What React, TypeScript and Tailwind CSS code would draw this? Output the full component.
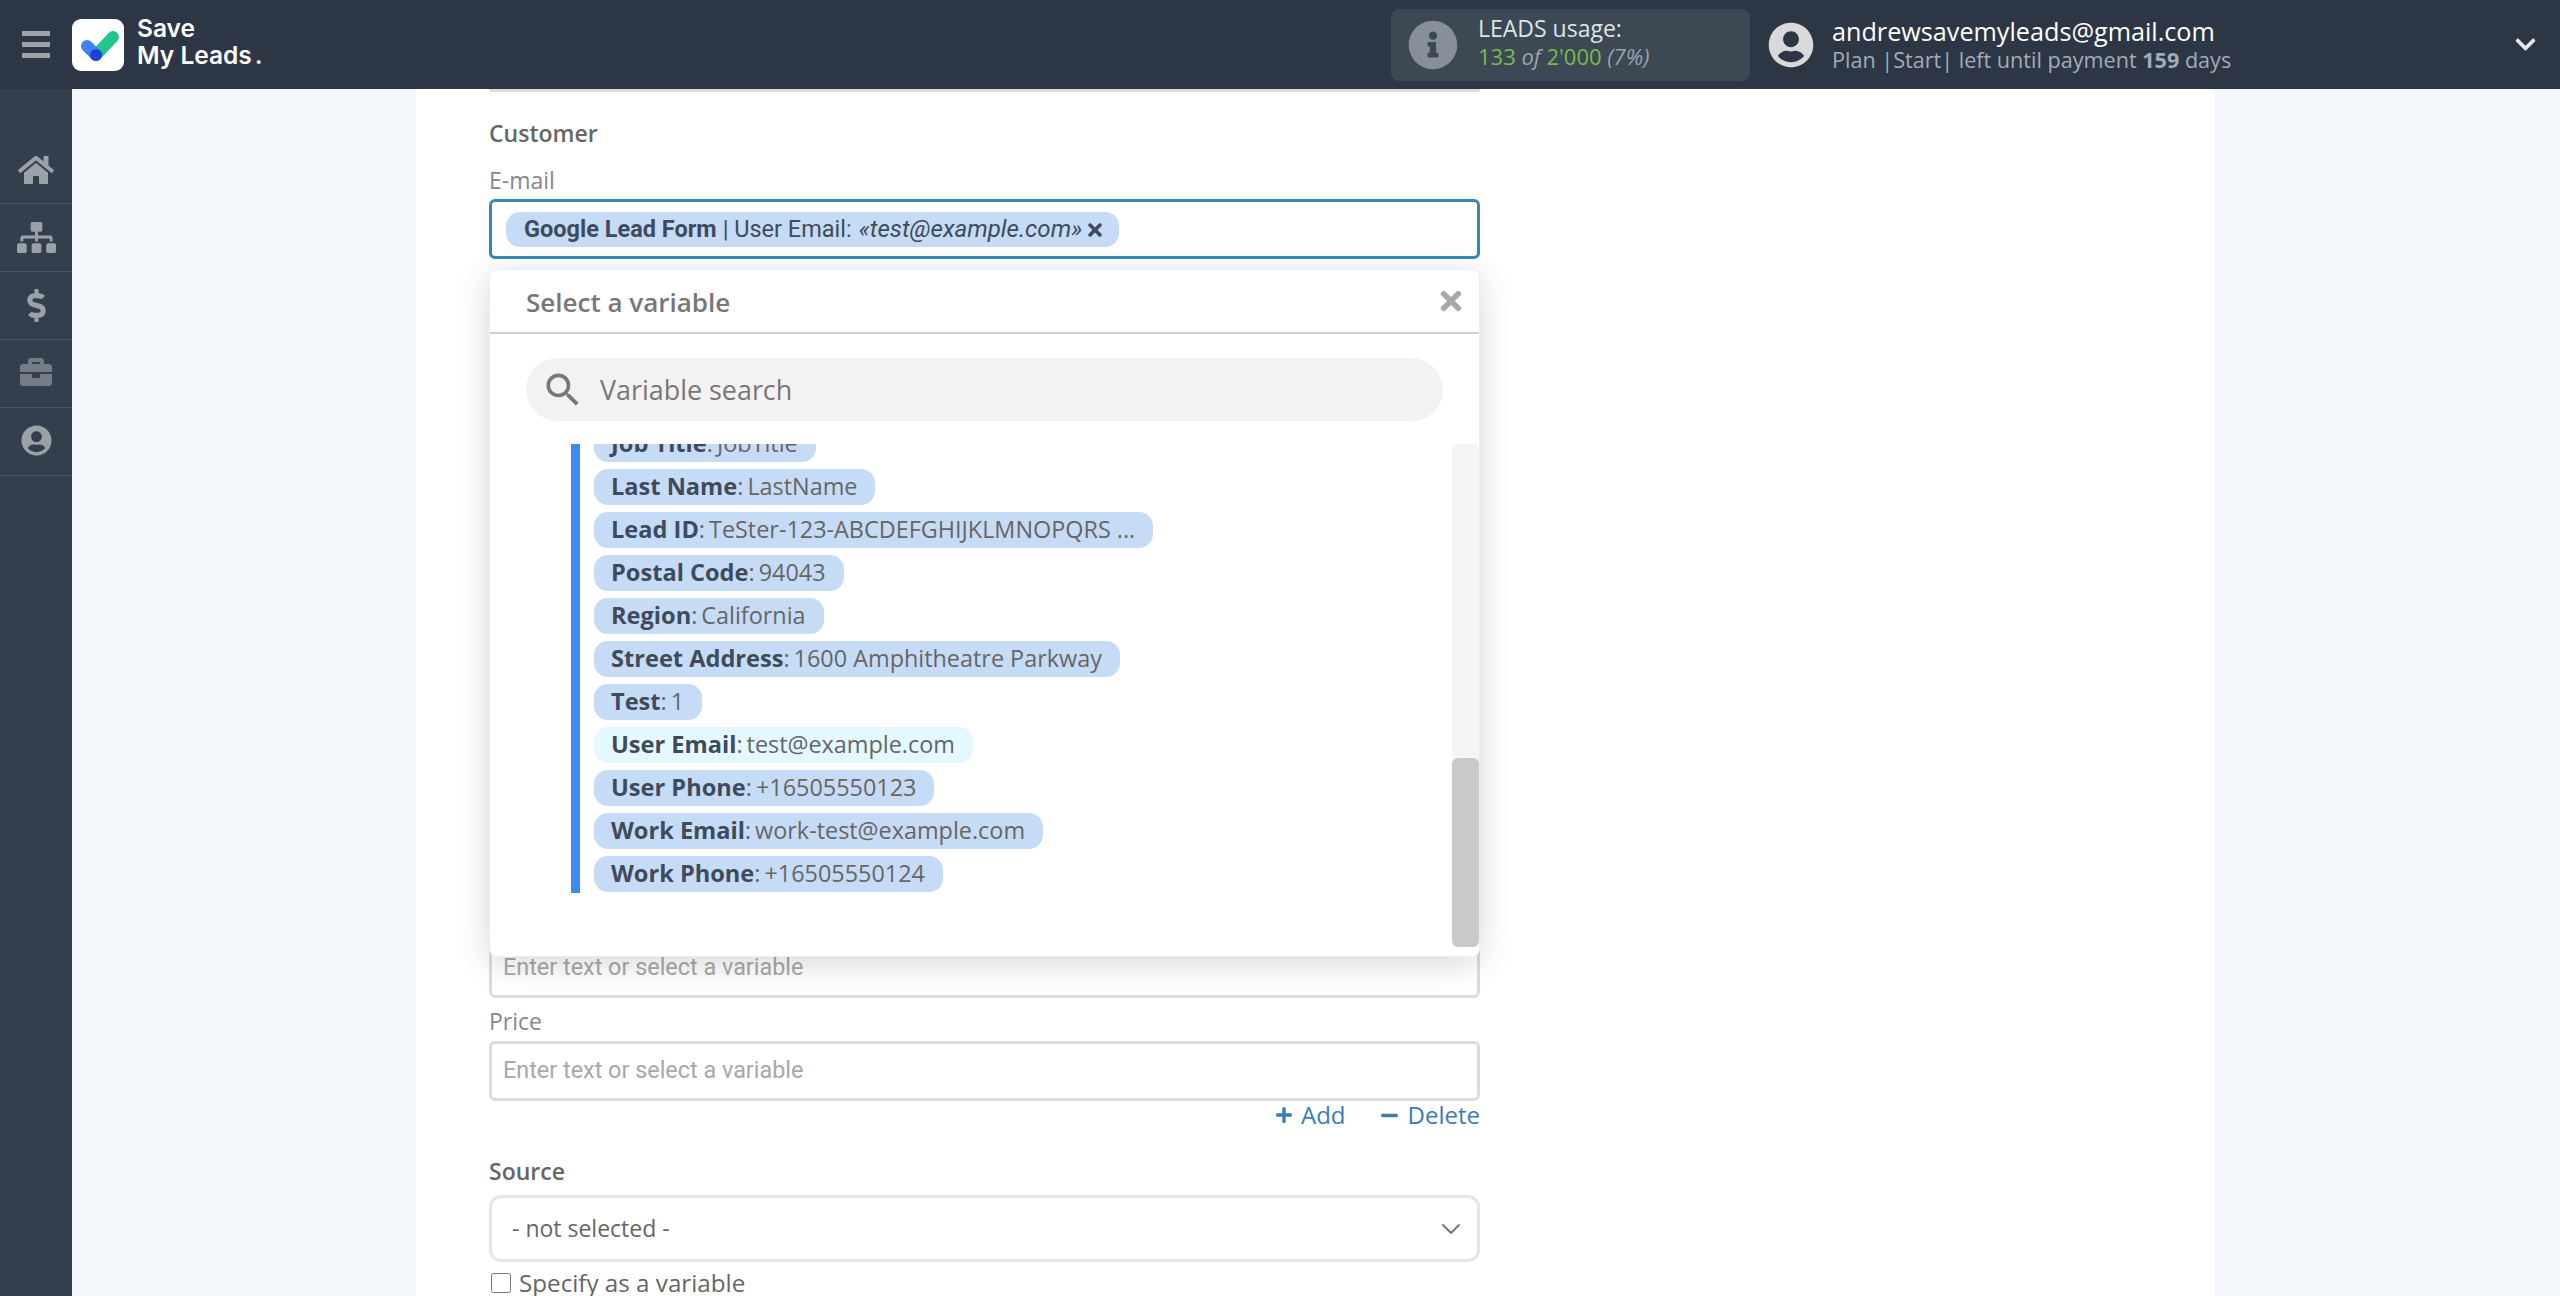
import { FaBriefcase, FaChevronDown, FaDollarSign, FaHome, FaInfoCircle, FaMinus, FaPlus, FaSitemap, FaTimes, FaUserCircle } from "react-icons/fa";
import { MdSearch } from "react-icons/md";
import { LuChevronDown } from "react-icons/lu";

const menu = [
  { icon: FaHome, size: "text-[36px]", color: "text-[#9aa1a8]" },
  { icon: FaSitemap, size: "text-[39px]", color: "text-[#9aa1a8]" },
  { icon: FaDollarSign, size: "text-[33px]", color: "text-[#9aa1a8]" },
  { icon: FaBriefcase, size: "text-[32px] -mt-[3px]", color: "text-[#747c86]" },
  { icon: FaUserCircle, size: "text-[31px] -mt-[2px]", color: "text-[#9aa1a8]" },
];

const variables = [
  { name: "Job Title", value: "JobTitle" },
  { name: "Last Name", value: "LastName" },
  { name: "Lead ID", value: "TeSter-123-ABCDEFGHIJKLMNOPQRS ..." },
  { name: "Postal Code", value: "94043" },
  { name: "Region", value: "California" },
  { name: "Street Address", value: "1600 Amphitheatre Parkway" },
  { name: "Test", value: "1" },
  { name: "User Email", value: "test@example.com", active: true },
  { name: "User Phone", value: "+16505550123" },
  { name: "Work Email", value: "work-test@example.com" },
  { name: "Work Phone", value: "+16505550124" },
];

const Logo = () => (
  <svg viewBox="0 0 52 52" className="w-[52px] h-[52px] shrink-0">
    <rect width="52" height="52" rx="9" fill="#fff" />
    <path d="M24 36 41 18" stroke="#22c58b" strokeWidth="12" strokeLinecap="round" fill="none" />
    <path d="M15 27 24 36" stroke="#4080fb" strokeWidth="12" strokeLinecap="round" fill="none" />
    <circle cx="24" cy="36" r="6" fill="#1f3fd6" />
  </svg>
);

const TextField = () => (
  <input
    placeholder="Enter text or select a variable"
    className="w-full h-[60px] rounded-[6px] border-[3px] border-[#dcdcdc] bg-white px-[11px] pb-[2px] text-[23.4px] font-['Roboto',sans-serif] outline-none placeholder:text-[#a8a8a8]"
  />
);

export default function App() {
  return (
    <div className="h-screen overflow-hidden bg-[#f3f6fb] font-['Open_Sans',sans-serif] flex flex-col">
      <header className="relative z-10 h-[89px] shrink-0 bg-[#2c3644] flex items-center">
        <div className="w-[1391px] shrink-0 flex items-center">
          <div className="w-[72px] flex flex-col items-center gap-[6px]">
            <span className="w-[28px] h-[5px] bg-[#9ca3a8]" />
            <span className="w-[28px] h-[5px] bg-[#9ca3a8]" />
            <span className="w-[28px] h-[5px] bg-[#9ca3a8]" />
          </div>
          <Logo />
          <div className="ml-[13px] -mt-[5px] text-white text-[24.5px] font-semibold leading-[27px] font-['Inter',sans-serif]">
            <div>Save</div>
            <div>My Leads<span className="ml-[3px]">.</span></div>
          </div>
        </div>

        <div className="mr-[18px] w-[359px] h-[72px] rounded-[8px] bg-[#3c4954] flex items-center pl-[17px]">
          <FaInfoCircle className="text-[50px] text-[#87909a]" />
          <div className="ml-[20px] -mt-[6px]">
            <div className="text-[23px] leading-[28px] text-[#dfe3e6]">LEADS usage:</div>
            <div className="text-[22px] leading-[28px] italic text-[#9aa3ab]">
              <span className="not-italic text-[#7cb84c]">133</span> of <span className="not-italic text-[#7cb84c]">2'000</span> (7%)
            </div>
          </div>
        </div>
        <FaUserCircle className="text-[46px] text-[#d9d9d9]" />
        <div className="ml-[18px] w-[420px]">
          <div className="text-[25.2px] leading-[30px] text-white">andrewsavemyleads@gmail.com</div>
          <div className="text-[21.6px] leading-[28px] text-[#a3abb5]">
            Plan |Start| left until payment <b>159</b> days
          </div>
        </div>
        <FaChevronDown className="ml-auto mr-[23px] text-[23px] text-[#e4e6e8]" />
      </header>

      <div className="flex flex-1 min-h-0">
        <aside className="w-[72px] shrink-0 bg-[#343f4e] pt-[47px]">
          {menu.map((item, index) => (
            <div key={index} className="h-[68px] border-b border-[#4a5461] flex items-center justify-center">
              <item.icon className={`${item.size} ${item.color}`} />
            </div>
          ))}
        </aside>

        <main className="flex-1 min-w-0 pl-[344px]">
          <div className="w-[1799px] h-full bg-white pl-[73px] text-[#666]">
            <div className="w-[991px]">
              <div className="h-[3px] rounded-b bg-[#dcdcdc]" />
              <div className="mt-[26px] text-[23px] leading-[30px] font-semibold text-[#666]">Customer</div>
              <div className="mt-[17px] text-[23px] leading-[30px] text-[#888]">E-mail</div>
              <div className="mt-[4px] h-[60px] rounded-[6px] border-[3px] border-[#368ab0] flex items-center pl-[14px]">
                <span className="h-[35px] rounded-[14px] bg-[#c6dbf5] flex items-center pl-[18px] pr-[14px] pt-[1px] text-[23.5px] text-[#3f4b5c] font-['Roboto',sans-serif]">
                  <b className="font-bold">Google Lead Form</b>
                  <span className="ml-[6px]">| User Email:</span>
                  <i className="ml-[7px] text-[24.1px]">«test@example.com»</i>
                  <FaTimes className="ml-[3px] text-[20px]" />
                </span>
              </div>

              <div className="relative pt-[679px]">
                <TextField />
                <div className="absolute z-[5] top-[10px] left-0 w-[991px] h-[688px] bg-white rounded-[8px] border border-[#eeeeee] shadow-[0_6px_34px_rgba(0,0,0,0.16)] flex flex-col">
                  <div className="h-[64px] shrink-0 border-b-2 border-[#cfcfcf] flex items-center justify-between pl-[36px] pr-[13px]">
                    <span className="text-[26px] mt-[2px] font-semibold text-[#777]">Select a variable</span>
                    <FaTimes className="text-[30px] text-[#a9a9a9]" />
                  </div>
                  <div className="mx-[36px] mt-[24px] h-[63px] shrink-0 rounded-full bg-[#f2f2f2] flex items-center pl-[15px]">
                    <MdSearch className="text-[44px] text-[#777]" />
                    <input
                      placeholder="Variable search"
                      className="ml-[15px] mt-[2px] flex-1 bg-transparent text-[26.9px] outline-none placeholder:text-[#777]"
                    />
                  </div>
                  <div className="mt-[23px] mb-[9px] flex-1 min-h-0 flex overflow-hidden">
                    <div className="flex-1 pl-[81px]">
                      <div className="-mt-[18px] border-l-[9px] border-[#4088f8] pl-[14px] pb-[1px] flex flex-col items-start gap-[7px]">
                        {variables.map((item) => (
                          <div
                            key={item.name}
                            className={`h-[36px] shrink-0 rounded-[14px] pl-[17px] pr-[18px] flex items-center text-[23.4px] leading-none text-[#666] ${item.active ? "bg-[#e4f8ff]" : "bg-[#c6dbf5]"}`}
                          >
                            <b className="font-bold text-[23.6px] text-[#3f4b5c]">{item.name}</b>: <span className="ml-[4px]">{item.value}</span>
                          </div>
                        ))}
                      </div>
                    </div>
                    <div className="w-[27px] shrink-0 rounded-[6px] bg-[#f5f5f5] flex flex-col justify-end">
                      <div className="h-[189px] rounded-[6px] bg-[#c9c9c9]" />
                    </div>
                  </div>
                </div>
              </div>

              <div className="mt-[8px] text-[23px] leading-[30px] text-[#888]">Price</div>
              <div className="mt-[5px]">
                <TextField />
              </div>
              <div className="h-[28px] flex items-center justify-end gap-[34px] text-[24px] text-[#3b7cb8]">
                <span className="flex items-center gap-[8px]"><FaPlus className="text-[18px]" />Add</span>
                <span className="flex items-center gap-[9px]"><FaMinus className="text-[19px]" />Delete</span>
              </div>

              <div className="mt-[27px] text-[23px] leading-[30px] font-semibold text-[#666]">Source</div>
              <div className="mt-[9px] h-[67px] rounded-[12px] border-[3px] border-[#e5e5e5] flex items-center justify-between pl-[20px] pr-[10px] text-[23px]">
                <span>- not selected -</span>
                <LuChevronDown className="text-[32px] text-[#777] [stroke-width:1.5]" />
              </div>
              <label className="mt-[6px] h-[30px] flex items-center text-[24.2px]">
                <input type="checkbox" className="w-[20px] h-[20px] ml-[2px]" />
                <span className="ml-[8px]">Specify as a variable</span>
              </label>
            </div>
          </div>
        </main>
      </div>
    </div>
  );
}
